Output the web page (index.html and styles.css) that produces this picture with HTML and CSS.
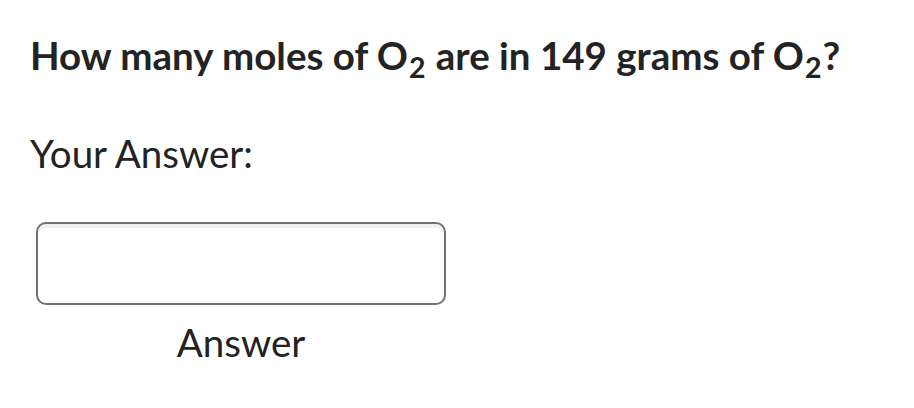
FILE: index.html
```html
<!DOCTYPE html>
<html>
<head>
<meta charset="utf-8">
<link rel="stylesheet" href="styles.css">
</head>
<body>
<div class="page">
  <h1 class="question">How many moles of O<sub>2</sub> are in 149 grams of O<sub>2</sub>?</h1>
  <p class="label">Your Answer:</p>
  <div class="answer">
    <input class="answer-input" type="text">
    <div class="answer-caption">Answer</div>
  </div>
</div>
</body>
</html>
```
FILE: styles.css
```css
html, body {
  margin: 0;
  padding: 0;
  background: #ffffff;
}
.page {
  font-family: Lato, "Open Sans", sans-serif;
  color: #232323;
  padding: 32px 0 0 30px;
}
.question {
  margin: 0;
  font-size: 38.5px;
  font-weight: 700;
  line-height: 46px;
}
.question sub {
  font-size: 0.74em;
  vertical-align: -8px;
  line-height: 0;
  margin: 0 1px 0 1px;
}
.label {
  margin: 52px 0 0 0;
  font-size: 38.5px;
  font-weight: 400;
  line-height: 46px;
}
.answer {
  display: flex;
  flex-direction: column;
  align-items: center;
  width: 410px;
  margin: 46px 0 0 6px;
}
.answer-input {
  box-sizing: border-box;
  width: 410px;
  height: 83px;
  border: 2px solid #6f7172;
  border-radius: 10px;
  background: #ffffff;
  box-shadow: inset 0 4px 0 #eef0f1;
  margin: 0;
}
.answer-caption {
  margin-top: 14px;
  font-size: 38.5px;
  line-height: 46px;
}
```
